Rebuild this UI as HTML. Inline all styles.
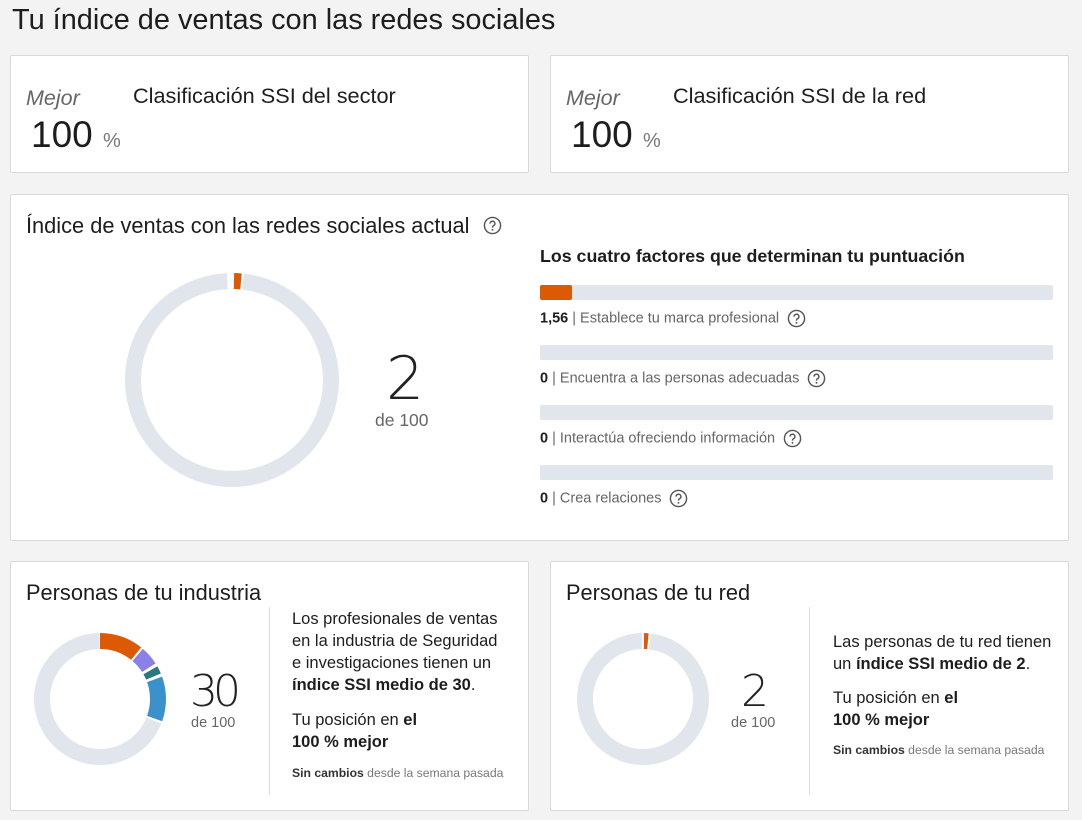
<!DOCTYPE html>
<html><head><meta charset="utf-8">
<style>
*{margin:0;padding:0;box-sizing:border-box}
body{width:1082px;height:820px;background:#f3f3f3;font-family:"Liberation Sans",sans-serif;color:#1d1d1d;position:relative;overflow:hidden}
.a{position:absolute;white-space:nowrap}
.card{position:absolute;background:#fff;border:1px solid #d9d9d9;border-radius:2px}
.bar{position:absolute;left:540px;width:513px;height:15px;background:#e1e6ed;border-radius:2px}
.lbl{position:absolute;left:540px;font-size:14.5px;color:#666}
.lbl b{color:#1d1d1d;font-weight:bold}
.q{display:inline-block;vertical-align:middle;margin-left:8px}
.t{font-size:16.5px;line-height:22px;color:#1d1d1d;white-space:nowrap}
.s{font-size:12.2px;color:#777}
.s b{color:#333}
.lt{font-family:"DejaVu Sans","Liberation Sans",sans-serif;font-weight:200;color:#222}
</style></head><body>
<div class="a" style="left:12px;top:4px;font-size:28.9px;color:#1d1d1d">Tu índice de ventas con las redes sociales</div>

<div class="card" style="left:10px;top:55px;width:519px;height:118px"></div>
<div class="a" style="left:26px;top:86px;font-size:21.5px;font-style:italic;color:#666">Mejor</div>
<div class="a" style="left:133px;top:83px;font-size:21.7px">Clasificación SSI del sector</div>
<div class="a" style="left:31px;top:114px;font-size:37px">100 <span style="font-size:20px;color:#777">%</span></div>

<div class="card" style="left:550px;top:55px;width:519px;height:118px"></div>
<div class="a" style="left:566px;top:86px;font-size:21.5px;font-style:italic;color:#666">Mejor</div>
<div class="a" style="left:673px;top:83px;font-size:21.7px">Clasificación SSI de la red</div>
<div class="a" style="left:571px;top:114px;font-size:37px">100 <span style="font-size:20px;color:#777">%</span></div>

<div class="card" style="left:10px;top:194px;width:1059px;height:347px"></div>
<div class="a" style="left:26px;top:213px;font-size:21.8px">Índice de ventas con las redes sociales actual</div>
<svg class="a" style="left:483px;top:216px" width="19" height="19" viewBox="0 0 20 20"><circle cx="10" cy="10" r="8.5" fill="none" stroke="#555" stroke-width="1.5"/><path d="M7.5 8a2.5 2.5 0 1 1 3.5 2.3c-.7.3-1 .8-1 1.5v.5" fill="none" stroke="#555" stroke-width="1.5"/><circle cx="10" cy="14.5" r="1" fill="#555"/></svg>

<svg class="a" style="left:120px;top:268px" width="224" height="224" viewBox="0 0 224 224">
<g transform="rotate(-90 112 112)">
<circle cx="112" cy="112" r="99" fill="none" stroke="#e1e6ed" stroke-width="16" stroke-dasharray="606 16" stroke-dashoffset="-11"/>
<circle cx="112" cy="112" r="99" fill="none" stroke="#dd5a05" stroke-width="16" stroke-dasharray="7 615" stroke-dashoffset="-2"/>
</g></svg>
<div class="a lt" style="left:386px;top:346px;font-size:60px;line-height:66px">2</div>
<div class="a" style="left:375px;top:410px;font-size:17.5px;color:#666">de 100</div>

<div class="a" style="left:540px;top:246px;font-size:17.8px;font-weight:bold">Los cuatro factores que determinan tu puntuación</div>
<div class="bar" style="top:285px"></div><div class="a" style="left:540px;top:285px;width:32px;height:15px;background:#dd5a05;border-radius:2px"></div>
<div class="lbl" style="top:309px"><b>1,56</b> | Establece tu marca profesional<svg class="q" width="19" height="19" viewBox="0 0 20 20"><circle cx="10" cy="10" r="8.5" fill="none" stroke="#555" stroke-width="1.5"/><path d="M7.5 8a2.5 2.5 0 1 1 3.5 2.3c-.7.3-1 .8-1 1.5v.5" fill="none" stroke="#555" stroke-width="1.5"/><circle cx="10" cy="14.5" r="1" fill="#555"/></svg></div>
<div class="bar" style="top:345px"></div>
<div class="lbl" style="top:369px"><b>0</b> | Encuentra a las personas adecuadas<svg class="q" width="19" height="19" viewBox="0 0 20 20"><circle cx="10" cy="10" r="8.5" fill="none" stroke="#555" stroke-width="1.5"/><path d="M7.5 8a2.5 2.5 0 1 1 3.5 2.3c-.7.3-1 .8-1 1.5v.5" fill="none" stroke="#555" stroke-width="1.5"/><circle cx="10" cy="14.5" r="1" fill="#555"/></svg></div>
<div class="bar" style="top:405px"></div>
<div class="lbl" style="top:429px"><b>0</b> | Interactúa ofreciendo información<svg class="q" width="19" height="19" viewBox="0 0 20 20"><circle cx="10" cy="10" r="8.5" fill="none" stroke="#555" stroke-width="1.5"/><path d="M7.5 8a2.5 2.5 0 1 1 3.5 2.3c-.7.3-1 .8-1 1.5v.5" fill="none" stroke="#555" stroke-width="1.5"/><circle cx="10" cy="14.5" r="1" fill="#555"/></svg></div>
<div class="bar" style="top:465px"></div>
<div class="lbl" style="top:489px"><b>0</b> | Crea relaciones<svg class="q" width="19" height="19" viewBox="0 0 20 20"><circle cx="10" cy="10" r="8.5" fill="none" stroke="#555" stroke-width="1.5"/><path d="M7.5 8a2.5 2.5 0 1 1 3.5 2.3c-.7.3-1 .8-1 1.5v.5" fill="none" stroke="#555" stroke-width="1.5"/><circle cx="10" cy="14.5" r="1" fill="#555"/></svg></div>

<!-- Industry -->
<div class="card" style="left:10px;top:561px;width:519px;height:250px"></div>
<div class="a" style="left:26px;top:580px;font-size:21.8px">Personas de tu industria</div>
<svg class="a" style="left:33px;top:632px" width="134" height="134" viewBox="0 0 134 134">
<g transform="rotate(-90 67 67)">
<circle cx="67" cy="67" r="58" fill="none" stroke="#e1e6ed" stroke-width="16" stroke-dasharray="250 115" stroke-dashoffset="-113"/>
<circle cx="67" cy="67" r="58" fill="none" stroke="#dd5a05" stroke-width="16" stroke-dasharray="39 326" stroke-dashoffset="0"/>
<circle cx="67" cy="67" r="58" fill="none" stroke="#8a80e8" stroke-width="16" stroke-dasharray="17 348" stroke-dashoffset="-41"/>
<circle cx="67" cy="67" r="58" fill="none" stroke="#2a7882" stroke-width="16" stroke-dasharray="7 358" stroke-dashoffset="-61"/>
<circle cx="67" cy="67" r="58" fill="none" stroke="#3a91cc" stroke-width="16" stroke-dasharray="40 325" stroke-dashoffset="-71"/>
</g></svg>
<div class="a lt" style="left:190px;top:667px;font-size:44px;line-height:50px;letter-spacing:-5px">30</div>
<div class="a" style="left:191px;top:715px;font-size:14.5px;color:#666">de 100</div>
<div class="a" style="left:269px;top:607px;width:1px;height:188px;background:#ddd"></div>
<div class="a t" style="left:292px;top:608px">Los profesionales de ventas<br>en la industria de Seguridad<br>e investigaciones tienen un<br><b>índice SSI medio de 30</b>.</div>
<div class="a t" style="left:292px;top:709px">Tu posición en <b>el<br>100 % mejor</b></div>
<div class="a s" style="left:292px;top:766px"><b>Sin cambios</b> desde la semana pasada</div>

<!-- Network -->
<div class="card" style="left:550px;top:561px;width:519px;height:250px"></div>
<div class="a" style="left:566px;top:580px;font-size:21.8px">Personas de tu red</div>
<svg class="a" style="left:576px;top:632px" width="134" height="134" viewBox="0 0 134 134">
<g transform="rotate(-90 67 67)">
<circle cx="67" cy="67" r="58" fill="none" stroke="#e1e6ed" stroke-width="16" stroke-dasharray="356 9" stroke-dashoffset="-7"/>
<circle cx="67" cy="67" r="58" fill="none" stroke="#dd5a05" stroke-width="16" stroke-dasharray="4 361" stroke-dashoffset="-1"/>
</g></svg>
<div class="a lt" style="left:741px;top:667px;font-size:44px;line-height:50px">2</div>
<div class="a" style="left:731px;top:715px;font-size:14.5px;color:#666">de 100</div>
<div class="a" style="left:809px;top:607px;width:1px;height:188px;background:#ddd"></div>
<div class="a t" style="left:833px;top:631px">Las personas de tu red tienen<br>un <b>índice SSI medio de 2</b>.</div>
<div class="a t" style="left:833px;top:687px">Tu posición en <b>el<br>100 % mejor</b></div>
<div class="a s" style="left:833px;top:743px"><b>Sin cambios</b> desde la semana pasada</div>
</body></html>
